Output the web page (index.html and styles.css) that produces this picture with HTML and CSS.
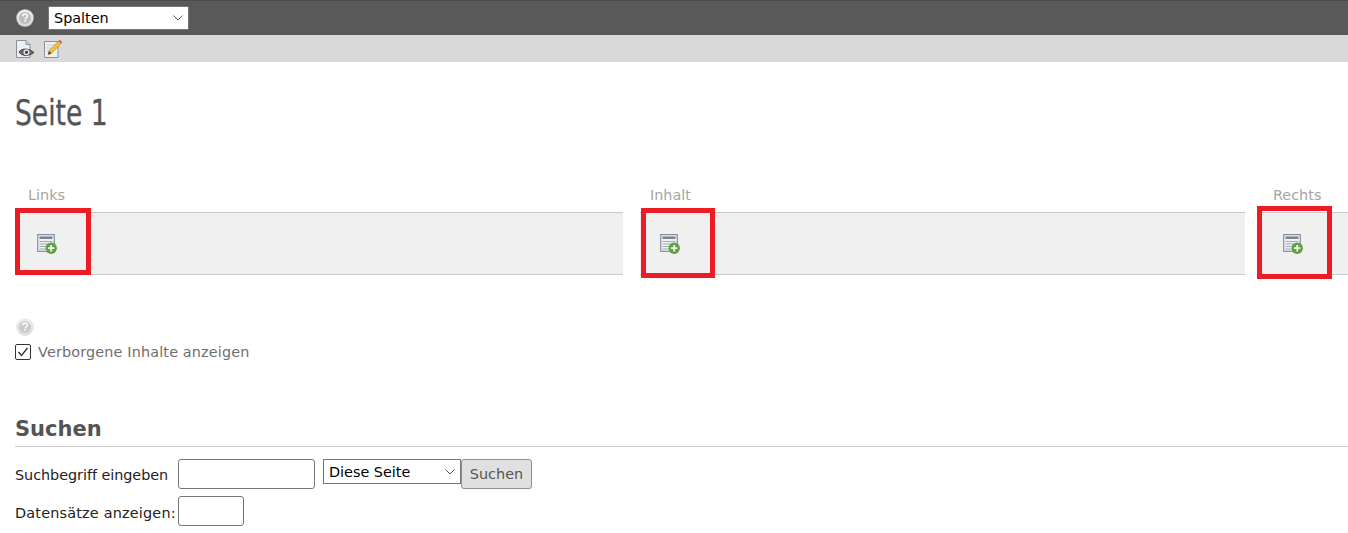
FILE: index.html
```html
<!DOCTYPE html>
<html lang="de">
<head>
<meta charset="utf-8">
<title>Seite 1</title>
<link rel="stylesheet" href="styles.css">
</head>
<body>
<svg class="defs" width="0" height="0" aria-hidden="true">
  <defs>
    <radialGradient id="help-grad" cx="50%" cy="35%" r="70%">
      <stop offset="0" stop-color="#f6f6f6"/>
      <stop offset="1" stop-color="#d2d2d2"/>
    </radialGradient>
    <symbol id="help" viewBox="0 0 18 18">
      <circle cx="9" cy="9" r="8.7" fill="url(#help-grad)"/>
      <circle cx="9" cy="9" r="6" fill="#bcbcbc"/>
      <path d="M6.7 7.400c0-1.500 1.100-2.300 2.400-2.300s2.300.8 2.300 2c0 1.700-2.200 1.700-2.200 3.300" fill="none" stroke="#f6f6f6" stroke-width="1.700"/>
      <rect x="8.300" y="11.300" width="1.800" height="1.800" fill="#f6f6f6"/>
    </symbol>
    <symbol id="add" viewBox="0 0 20 20">
      <path d="M.7.700h16.600v16.600H.7z" fill="#eef0f3" stroke="#87929e" stroke-width="1.200"/>
      <path d="M2.500 2.500h13v2.400h-13z" fill="#737e8a"/>
      <path d="M2.500 7.500h13M2.500 10h13M2.500 12.500h8M2.500 15h6" stroke="#a3abb3"/>
      <circle cx="14.200" cy="14.200" r="5.700" fill="#5f9f45"/>
      <path d="M14.200 11v6.400M11 14.200h6.400" stroke="#f4f8f0" stroke-width="1.800"/>
    </symbol>
  </defs>
</svg>

<header class="topbar">
  <svg class="icon-help"><use href="#help"/></svg>
  <select class="view-select"><option>Spalten</option></select>
</header>

<nav class="toolbar">
  <svg class="tool" viewBox="0 0 20 20">
    <path d="M1.500 1.500h9.500l4 4v13h-13.500z" fill="#eef0f3" stroke="#87929e"/>
    <path d="M11 1.500v4h4" fill="#cfd5db" stroke="#87929e"/>
    <path d="M4 13c2.500-4 10-4 15 .5c-5 4-12.500 4-15-.5z" fill="#6a6a6a" stroke="#444"/>
    <circle cx="11.500" cy="13.300" r="3" fill="#e2e2e2"/>
    <circle cx="11.500" cy="13.300" r="1.500" fill="#333"/>
  </svg>
  <svg class="tool" viewBox="0 0 20 20">
    <path d="M1.500 2.500h13.500v16h-13.500z" fill="#eef0f3" stroke="#87929e"/>
    <path d="M3.500 6h9M3.500 9h7M3.500 12h4" stroke="#c3c9cf"/>
    <path d="M5 15.500l1-3.500 9.500-10 2.500 2.500-9.500 10z" fill="#f5c33a" stroke="#b5851a" stroke-width=".7"/>
    <path d="M15.500 2l1.200-1.200 2.500 2.500-1.200 1.200z" fill="#e0503c"/>
    <path d="M5 15.500l1-3.500 2.500 2.500z" fill="#444"/>
  </svg>
</nav>

<main class="page">
  <h1 class="title"><span class="title-text">Seite 1</span></h1>

  <section class="columns">
    <div class="col">
      <h2 class="col-label">Links</h2>
      <div class="col-body">
        <svg class="icon-add"><use href="#add"/></svg>
        <span class="mark mark-left"></span>
      </div>
    </div>
    <div class="col">
      <h2 class="col-label">Inhalt</h2>
      <div class="col-body">
        <svg class="icon-add"><use href="#add"/></svg>
        <span class="mark mark-mid"></span>
      </div>
    </div>
    <div class="col">
      <h2 class="col-label">Rechts</h2>
      <div class="col-body">
        <svg class="icon-add"><use href="#add"/></svg>
        <span class="mark mark-right"></span>
      </div>
    </div>
  </section>

  <div class="options">
    <svg class="icon-help-small"><use href="#help"/></svg>
    <label class="check-row"><input class="check" type="checkbox" checked> Verborgene Inhalte anzeigen</label>
  </div>

  <section class="search">
    <h2 class="search-title">Suchen</h2>
    <div class="search-row">
      <label class="search-label">Suchbegriff eingeben</label>
      <input class="field field-term" type="text">
      <select class="scope"><option>Diese Seite</option></select>
      <button class="go" type="button">Suchen</button>
    </div>
    <div class="search-row search-row-second">
      <label class="search-label-short">Datensätze anzeigen:</label>
      <input class="field field-count" type="text">
    </div>
  </section>
</main>
</body>
</html>
```

FILE: styles.css
```css
* { box-sizing: border-box; }

html, body { margin: 0; padding: 0; }

body {
  background: #fff;
  color: #222;
  font-family: "DejaVu Sans", Verdana, sans-serif;
  font-size: 14.4px;
  height: 533px;
  overflow: hidden;
}

.defs { display: block; height: 0; }

.topbar {
  height: 35px;
  background: #595959;
  border-top: 1px solid #4a4a4a;
  display: flex;
  align-items: center;
  padding-left: 16px;
  gap: 14px;
}

.icon-help { width: 18px; height: 18px; }

.view-select,
.scope {
  appearance: none;
  border: 1px solid #767676;
  border-radius: 0;
  background: #fff url("data:image/svg+xml,%3Csvg xmlns='http://www.w3.org/2000/svg' width='10' height='6'%3E%3Cpath d='M.5.5l4.500 4.500 4.500-4.500' fill='none' stroke='%23555'/%3E%3C/svg%3E") no-repeat right 5px center;
  font: 14.4px "DejaVu Sans", sans-serif;
  color: #000;
}

.view-select {
  width: 141px;
  height: 24px;
  padding-left: 5px;
}

.toolbar {
  height: 27px;
  padding-top: 1px;
  background: #d9d9d9;
  display: flex;
  align-items: center;
  padding-left: 15px;
  gap: 8px;
}

.tool { width: 20px; height: 20px; }

.page { padding-left: 15px; }

.title {
  margin: 0;
  padding-top: 30px;
  height: 120px;
  font: 400 36px/42px "DejaVu Sans", sans-serif;
  font-stretch: condensed;
  color: #545454;
  -webkit-text-stroke: .3px #545454;
}

.title-text {
  display: inline-block;
  transform: scaleX(.82);
  transform-origin: left center;
}

.columns {
  display: grid;
  grid-template-columns: 608px 605px 91px;
  column-gap: 17px;
  margin-right: -5px;
}

.col:nth-child(3) { margin-left: -2px; }

.col-label {
  margin: 0;
  height: 30px;
  padding: 4px 0 0 13px;
  font: 400 14.4px/18px "DejaVu Sans", sans-serif;
  color: #a5a5a5;
}

.col:nth-child(2) .col-label { padding-left: 10px; }

.col-body {
  position: relative;
  height: 63px;
  background: #f0f0f0;
  border-top: 1px solid #c9c9c9;
  border-bottom: 1px solid #c9c9c9;
  padding: 21px 0 0 22px;
}

.col:nth-child(2) .col-body { padding-left: 20px; }
.col:nth-child(3) .col-body { padding-left: 23px; }

.icon-add { display: block; width: 20px; height: 20px; }

.mark {
  position: absolute;
  border: 5px solid #ed1c24;
  pointer-events: none;
}

.mark-left { left: 0; top: -5px; width: 76px; height: 67px; }
.mark-mid { left: 1px; top: -5px; width: 74px; height: 70px; }
.mark-right { left: -3px; top: -7px; width: 75px; height: 73px; }

.options { padding-top: 43px; }

.icon-help-small { display: block; width: 18px; height: 18px; margin-left: 1px; opacity: .8; }

.check-row {
  display: flex;
  align-items: center;
  gap: 7px;
  height: 18px;
  margin-top: 7px;
  color: #6e6e6e;
  letter-spacing: .15px;
}

.check {
  appearance: none;
  margin: 0;
  width: 16px;
  height: 16px;
  border: 1px solid #333;
  border-radius: 2px;
  background: #fff url("data:image/svg+xml,%3Csvg xmlns='http://www.w3.org/2000/svg' width='14' height='14'%3E%3Cpath d='M2.500 7l3 3.500 6-7.500' fill='none' stroke='%23333' stroke-width='1.300'/%3E%3C/svg%3E") no-repeat center;
}

.search { margin-top: 54px; }

.search-title {
  margin: 0 0 12px;
  height: 32px;
  font: 700 21px/28px "DejaVu Sans", sans-serif;
  color: #545454;
  border-bottom: 1px solid #cfcfcf;
}

.search-row { display: flex; align-items: flex-start; }

.search-row-second { margin-top: 7px; }

.search-label { width: 163px; height: 30px; padding-top: 1px; line-height: 30px; color: #222; letter-spacing: -.05px; }

.search-label-short { width: 163px; height: 30px; padding-top: 2px; line-height: 30px; letter-spacing: .2px; }

.field {
  height: 30px;
  border: 1px solid #767676;
  border-radius: 3px;
  background: #fff;
}

.field-term { width: 137px; }
.field-count { width: 66px; }

.scope {
  width: 138px;
  height: 25px;
  margin-left: 8px;
  padding-left: 5px;
}

.go {
  width: 71px;
  height: 30px;
  border: 1px solid #8f8f8f;
  border-radius: 3px;
  background: #e0e0e0;
  font: 14.4px "DejaVu Sans", sans-serif;
  color: #555;
  padding: 0;
}
```
